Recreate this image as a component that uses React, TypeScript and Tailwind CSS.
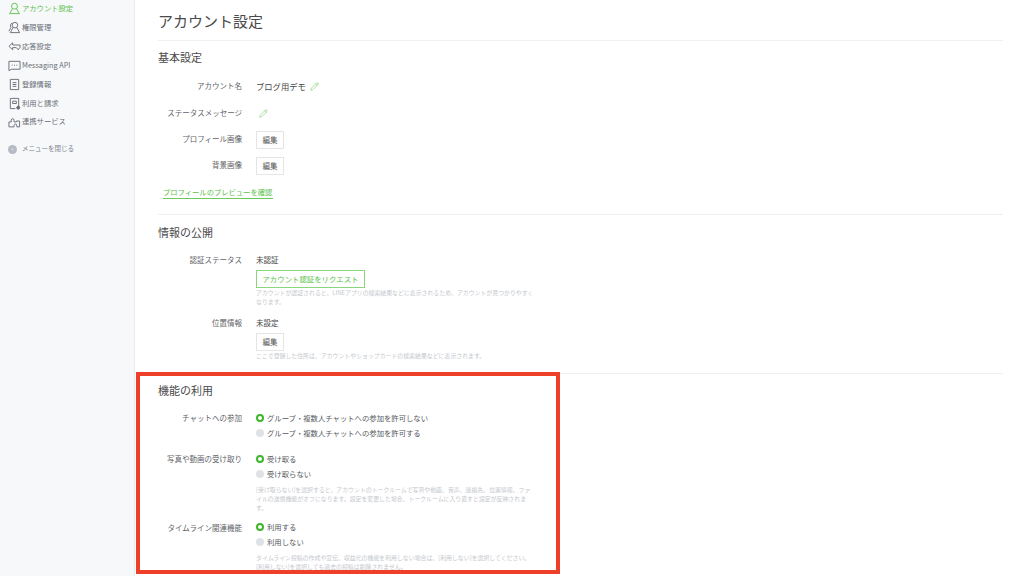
import { Pencil } from "lucide-react"

const font = { fontFamily: '"Noto Sans CJK JP", "Noto Sans", sans-serif' }

const UserIcon = () => (
  <svg viewBox="0 0 14 14" className="h-[13px] w-[13px]" fill="none" stroke="currentColor" strokeWidth="1">
    <circle cx="7" cy="4.5" r="3.2" />
    <path d="M4.8 7.2 1.8 12.5h10.4L9.2 7.2" />
  </svg>
)
const UsersIcon = () => (
  <svg viewBox="0 0 14 14" className="h-[13px] w-[13px]" fill="none" stroke="currentColor" strokeWidth="1">
    <circle cx="7.5" cy="4.5" r="3" />
    <path d="M5.5 7 2.5 12.5h10L9.5 7M4.5 2.2A3 3 0 0 0 3.2 6.8L1 11" />
  </svg>
)
const ReplyIcon = () => (
  <svg viewBox="0 0 14 14" className="h-[13px] w-[13px]" fill="none" stroke="currentColor" strokeWidth="1">
    <path d="M5 3 1 6.8 5 10.5V8.2h4l2 2.3 2-2.6V5.4H5z" />
  </svg>
)
const ChatIcon = () => (
  <svg viewBox="0 0 14 14" className="h-[13px] w-[13px]" fill="none" stroke="currentColor" strokeWidth="1">
    <path d="M1 2.5h12v8.5H4L1 12.5z" />
    <path d="M4 6.7h1M6.5 6.7h1M9 6.7h1" />
  </svg>
)
const DocIcon = () => (
  <svg viewBox="0 0 14 14" className="h-[13px] w-[13px]" fill="none" stroke="currentColor" strokeWidth="1">
    <path d="M2.5 1.5h9v11h-9z" />
    <path d="M5 5h4M5 7h4M5 9h4" />
  </svg>
)
const BillIcon = () => (
  <svg viewBox="0 0 14 14" className="h-[13px] w-[13px]" fill="none" stroke="currentColor" strokeWidth="1">
    <path d="M2.5 1.5h9v9M8 12.5H2.5v-11" />
    <path d="M5 4.5h4v2.5H5z" />
    <circle cx="11" cy="11.5" r="1.6" fill="currentColor" />
  </svg>
)
const PuzzleIcon = () => (
  <svg viewBox="0 0 14 14" className="h-[13px] w-[13px]" fill="none" stroke="currentColor" strokeWidth="1">
    <path d="M1 12.8V7.5h2.5V5.5a1.5 1.5 0 1 1 3 0v2H9V6.5h3.5v6.3H9.5v-1.5a1.5 1.5 0 0 0-3 0v1.5z" />
  </svg>
)

const menu = [
  { label: "権限管理", icon: <UsersIcon /> },
  { label: "応答設定", icon: <ReplyIcon /> },
  { label: "Messaging API", icon: <ChatIcon /> },
  { label: "登録情報", icon: <DocIcon /> },
  { label: "利用と請求", icon: <BillIcon /> },
  { label: "連携サービス", icon: <PuzzleIcon /> },
]

const Sidebar = () => (
  <aside className="flex h-[576px] w-[135px] shrink-0 flex-col border-r border-[#e8eaee] bg-[#f7f8fa] pl-[8px]">
    <div className="flex h-[19px] -mt-[1px] items-center gap-[2px] text-[#5ac24a]">
      <UserIcon />
      <span className="text-[7.3px] -ml-[1px]">アカウント設定</span>
    </div>
    {menu.map(item => (
      <div key={item.label} className="flex h-[18.9px] items-center gap-[2px] text-[#676c75]">
        {item.icon}
        <span className="text-[7.3px] -ml-[1px]">{item.label}</span>
      </div>
    ))}
    <div className="mt-[13px] flex items-center gap-[5px] text-[#7b818c]">
      <span className="flex h-[9px] w-[9px] items-center justify-center rounded-full bg-[#b5bac4] text-[6px] leading-none text-white">
        ‹
      </span>
      <span className="text-[6.5px]">メニューを閉じる</span>
    </div>
  </aside>
)

const Row = ({ label, className, children }: { label: string; className: string; children?: React.ReactNode }) => (
  <div className={`flex ${className}`}>
    <div className="w-[84px] shrink-0 pt-[1px] text-right text-[7.5px] leading-[12px] text-[#5f6368]">{label}</div>
    <div className="ml-[14px] w-[278px]">{children}</div>
  </div>
)

const EditButton = () => (
  <div className="flex h-[18px] w-[28px] items-center justify-center border border-[#e3e5e8] bg-white text-[7.5px] text-[#555]">
    編集
  </div>
)

const Note = ({ children }: { children: React.ReactNode }) => (
  <p className="text-[5.9px] leading-[9px] text-[#c4c8cd]">{children}</p>
)

const Radio = ({ on, label }: { on?: boolean; label: string }) => (
  <div className="flex h-[15px] items-center gap-[3px]">
    {on ? (
      <span className="h-[8px] w-[8px] rounded-full border-[2.5px] border-[#3fb52c] bg-white" />
    ) : (
      <span className="h-[8px] w-[8px] rounded-full bg-[#dfe2e7]" />
    )}
    <span className="text-[7.35px] leading-none text-[#555a60]">{label}</span>
  </div>
)

const App = () => (
  <div className="relative flex h-[576px] w-[1024px] overflow-hidden bg-white" style={font}>
    <Sidebar />
    <main className="w-[868px] pl-[23px]">
      <h1 className="flex h-[41px] items-center border-b border-[#eeeff1] pt-[1px] text-[15px] leading-none text-[#4a4a4a]">
        アカウント設定
      </h1>
      <h2 className="mt-[8px] text-[11px] leading-[16px] text-[#4a4a4a]">基本設定</h2>

      <Row label="アカウント名" className="mt-[14px] h-[27px]">
        <div className="flex items-center gap-[4px] text-[8.3px] leading-[14px] text-[#444]">
          ブログ用デモ <Pencil size={9} strokeWidth={1.5} className="text-[#6cc95c]" />
        </div>
      </Row>
      <Row label="ステータスメッセージ" className="h-[26px]">
        <div className="flex h-[14px] items-center pl-[3px]">
          <Pencil size={9} strokeWidth={1.5} className="text-[#6cc95c]" />
        </div>
      </Row>
      <Row label="プロフィール画像" className="h-[26px]">
        <div className="-mt-[1px]"><EditButton /></div>
      </Row>
      <Row label="背景画像" className="h-[26px]">
        <div className="-mt-[1px]"><EditButton /></div>
      </Row>
      <div className="ml-[5px] mt-[2px] w-[110px] whitespace-nowrap border-b border-[#6cc95c] text-[7.3px] leading-[12px] text-[#5ac24a]">
        プロフィールのプレビューを確認
      </div>

      <div className="mt-[15px] border-t border-[#eeeff1]" />
      <h2 className="mt-[9px] text-[11px] leading-[16px] text-[#4a4a4a]">情報の公開</h2>
      <Row label="認証ステータス" className="mt-[13px] h-[63px]">
        <div className="text-[7.5px] leading-[14px] text-[#444]">未認証</div>
        <div className="mt-[3px] flex h-[18px] w-[109px] items-center justify-center border border-[#8ad57d] text-[7.4px] text-[#5ac24a]">
          アカウント認証をリクエスト
        </div>
        <Note>アカウントが認証されると、LINEアプリの検索結果などに表示されるため、アカウントが見つかりやすくなります。</Note>
      </Row>
      <Row label="位置情報" className="h-[51px]">
        <div className="text-[7.5px] leading-[14px] text-[#444]">未設定</div>
        <div className="mt-[3px]"><EditButton /></div>
        <Note>ここで登録した住所は、アカウントやショップカードの検索結果などに表示されます。</Note>
      </Row>

      <div className="mt-[6px] border-t border-[#eeeff1]" />
      <h2 className="mt-[8px] text-[11px] leading-[16px] text-[#4a4a4a]">機能の利用</h2>
      <Row label="チャットへの参加" className="mt-[13px] h-[41px]">
        <div className="-mt-[1px]">
          <Radio on label="グループ・複数人チャットへの参加を許可しない" />
          <Radio label="グループ・複数人チャットへの参加を許可する" />
        </div>
      </Row>
      <Row label="写真や動画の受け取り" className="h-[69px]">
        <div className="-mt-[1px]">
          <Radio on label="受け取る" />
          <Radio label="受け取らない" />
        </div>
        <div className="mt-[4px]">
          <Note>[受け取らない]を選択すると、アカウントのトークルームで写真や動画、音声、連絡先、位置情報、ファイルの送信機能がオフになります。設定を変更した場合、トークルームに入り直すと設定が反映されます。</Note>
        </div>
      </Row>
      <Row label="タイムライン関連機能" className="h-[50px]">
        <div className="-mt-[2px]">
          <Radio on label="利用する" />
          <Radio label="利用しない" />
        </div>
        <div className="mt-[4px]">
          <Note>タイムライン投稿の作成や宣伝、収益化の機能を利用しない場合は、[利用しない]を選択してください。[利用しない]を選択しても過去の投稿は削除されません。</Note>
        </div>
      </Row>
    </main>
    <div className="pointer-events-none absolute left-[136px] top-[372px] h-[202px] w-[424px] border-[4px] border-[#ee4028]" />
  </div>
)

export default App
